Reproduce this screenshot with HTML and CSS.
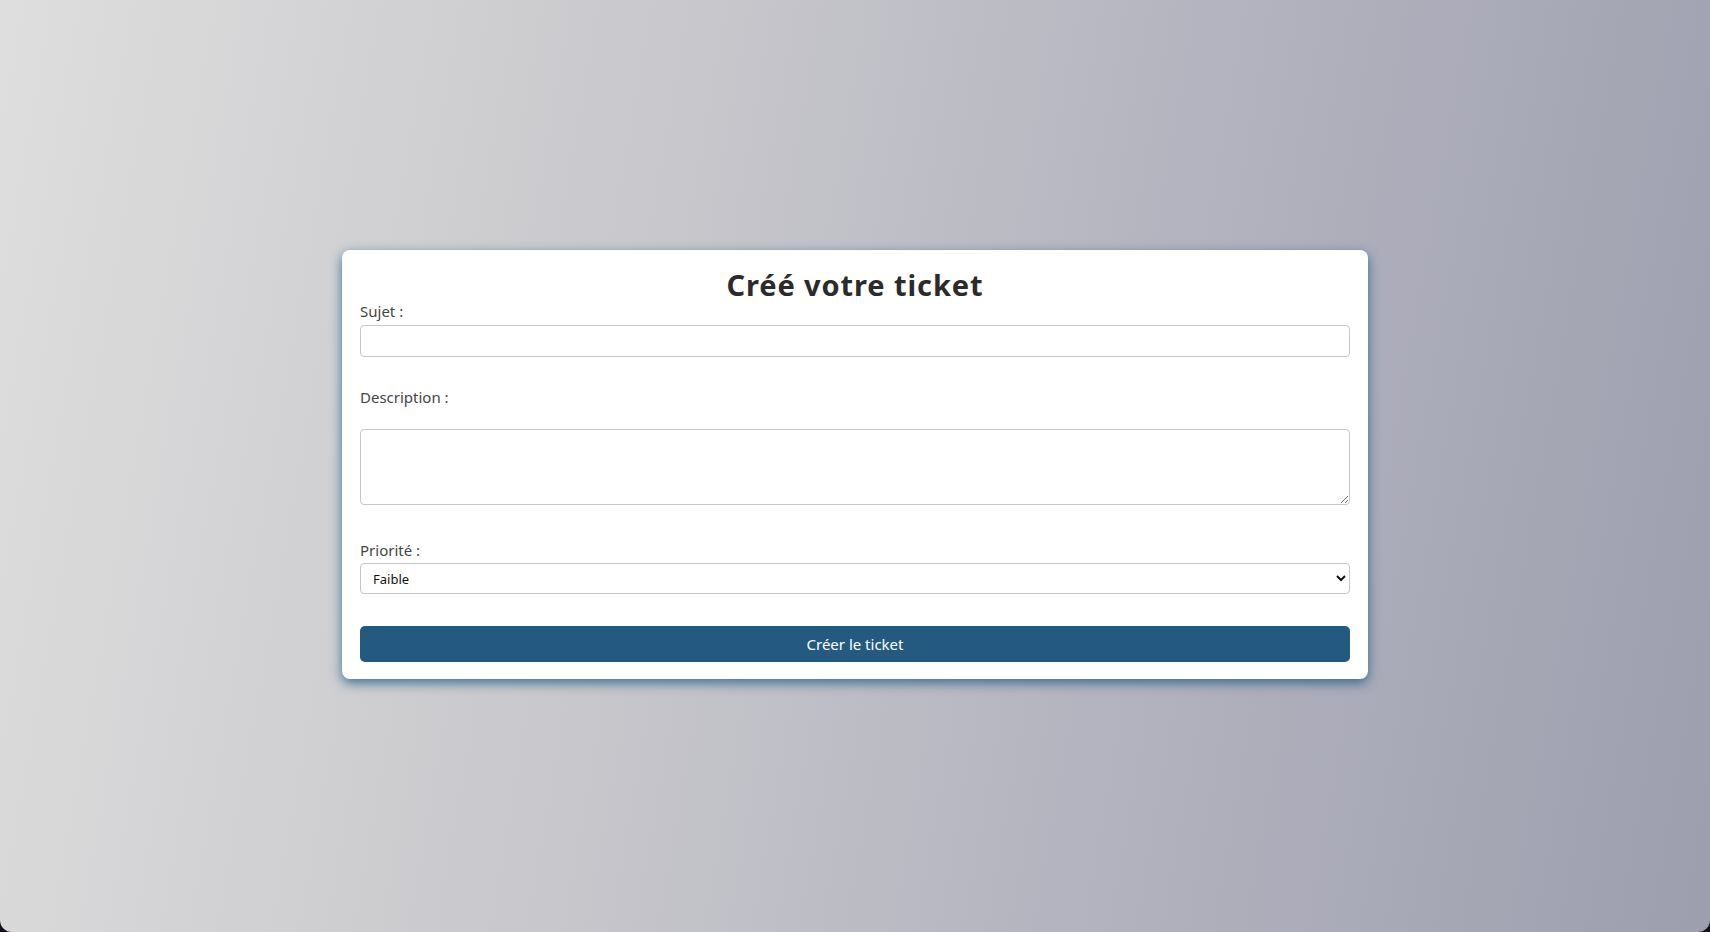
FILE: index.html
```html
<!DOCTYPE html>
<html lang="fr">
<head>
<meta charset="utf-8">
<title>Créer un ticket</title>
<link rel="stylesheet" href="styles.css">
</head>
<body>
<main class="page">
  <form class="card">
    <h1 class="title">Créé votre ticket</h1>
    <label class="label label-first" for="sujet">Sujet :</label>
    <input class="field" id="sujet" type="text">
    <label class="label label-desc" for="desc">Description :</label>
    <textarea class="field area" id="desc"></textarea>
    <label class="label label-prio" for="prio">Priorité :</label>
    <select class="field select" id="prio">
      <option>Faible</option>
      <option>Moyenne</option>
      <option>Haute</option>
    </select>
    <button class="submit" type="button">Créer le ticket</button>
  </form>
</main>
</body>
</html>
```

FILE: styles.css
```css
html {
  background: #15111c;
}
body {
  margin: 0;
  height: 100vh;
  border-radius: 0 0 12px 12px;
  overflow: hidden;
  background: linear-gradient(100deg, #dedede 0%, #c9c9cd 35%, #b4b4c0 65%, #9d9eae 100%);
  font-family: "Noto Sans", "Open Sans", sans-serif;
}
.page {
  height: 100%;
  box-sizing: border-box;
  padding-bottom: 3px;
  display: flex;
  align-items: center;
  justify-content: center;
}
.card {
  width: 60%;
  box-sizing: border-box;
  background: #fff;
  border-radius: 8px;
  padding: 17px 18px 17px;
  display: flex;
  flex-direction: column;
  box-shadow: 0 4px 12px rgba(35, 95, 135, 0.85);
}
.title {
  margin: 0;
  text-align: center;
  font-size: 29px;
  line-height: 35px;
  font-weight: 700;
  color: #2b2b2b;
  letter-spacing: 0.9px;
}
.label {
  font-size: 15px;
  line-height: 18px;
  color: #454545;
}
.label-first {
  margin-top: 0;
  margin-bottom: 5px;
}
.label-desc {
  margin-top: 31px;
  margin-bottom: 23px;
}
.label-prio {
  margin-top: 36px;
  margin-bottom: 4px;
}
.field {
  box-sizing: border-box;
  width: 100%;
  border: 1px solid #c6c6c6;
  border-radius: 4px;
  background: #fff;
  font-family: inherit;
  margin: 0;
}
input.field {
  height: 32px;
}
.area {
  height: 76px;
  resize: vertical;
  display: block;
}
.select {
  height: 31px;
  font-size: 13px;
  padding: 0 8px;
  color: #111;
}
.submit {
  margin-top: 32px;
  height: 36px;
  border: none;
  border-radius: 5px;
  background: #255a80;
  color: #fff;
  font-family: inherit;
  font-size: 15px;
  cursor: pointer;
}
```
